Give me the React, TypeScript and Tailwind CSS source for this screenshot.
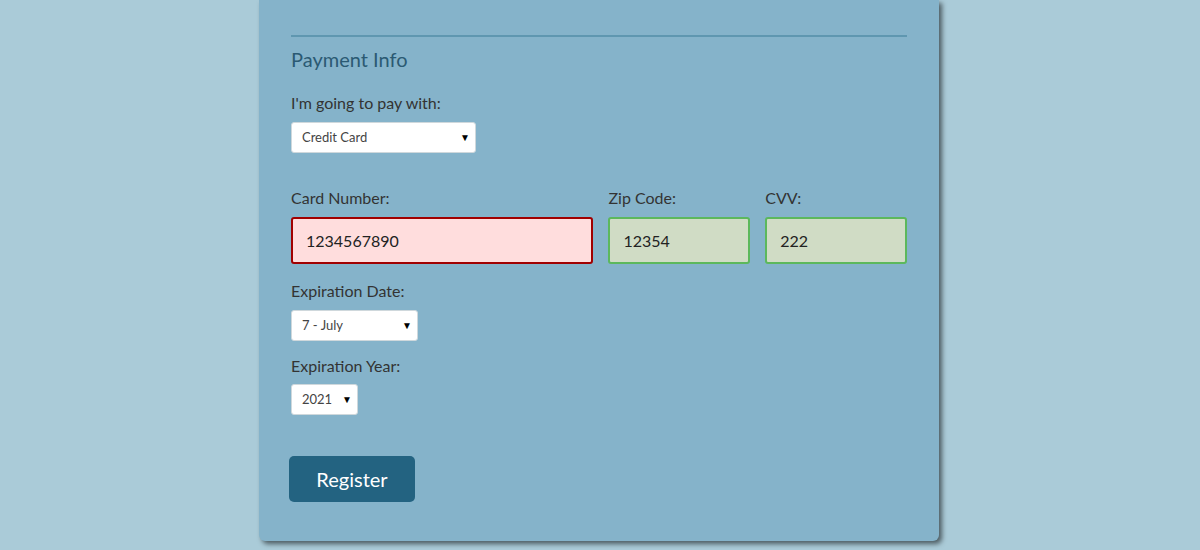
const FONT = "font-['Lato','Open_Sans',sans-serif]";

const SelectBox = ({ value, width }: { value: string; width: string }) => (
  <div className={`relative h-[31px] ${width} rounded-[3px] bg-white border border-[#cfd8dc]`}>
    <select
      defaultValue={value}
      className="h-full w-full appearance-none bg-transparent pl-[10px] pr-6 text-[13px] text-[#444] outline-none"
    >
      <option>{value}</option>
    </select>
    <span className="pointer-events-none absolute right-[5px] top-[7px] text-[10px] text-black">▼</span>
  </div>
);

const Field = ({
  label,
  value,
  width,
  invalid,
}: {
  label: string;
  value: string;
  width: string;
  invalid?: boolean;
}) => (
  <div className={`flex flex-col ${width}`}>
    <label className="text-[16px] leading-6 text-[#333]">{label}</label>
    <input
      readOnly
      value={value}
      className={
        invalid
          ? "mt-[7px] h-[47px] w-full rounded-[3px] border-2 border-[#a10000] bg-[#ffdddd] px-[13px] text-[16px] text-[#222] outline-none"
          : "mt-[7px] h-[47px] w-full rounded-[3px] border-2 border-[#5cb85c] bg-[#d0dcc5] px-[13px] text-[16px] text-[#222] outline-none"
      }
    />
  </div>
);

export default function App() {
  return (
    <div className={`flex h-[550px] w-full justify-center overflow-hidden bg-[#aacbd8] ${FONT}`}>
      <div className="-ml-[2px] flex h-[541px] w-[680px] flex-col rounded-b-[6px] bg-[#85b3ca] px-8 pt-[35px] shadow-[3px_3px_5px_rgba(0,0,0,0.55)]">
        <div className="h-[2px] w-full bg-[#5f97b0]" />
        <h2 className="mt-2 text-[20px] leading-7 text-[#2b5a73]">Payment Info</h2>

        <label className="mt-[18px] text-[16px] leading-6 text-[#333]">I'm going to pay with:</label>
        <div className="mt-[7px]">
          <SelectBox value="Credit Card" width="w-[185px]" />
        </div>

        <div className="mt-[33px] flex gap-[15px]">
          <Field label="Card Number:" value="1234567890" width="w-[303px]" invalid />
          <Field label="Zip Code:" value="12354" width="w-[142px]" />
          <Field label="CVV:" value="222" width="w-[142px]" />
        </div>

        <label className="mt-[15px] text-[16px] leading-6 text-[#333]">Expiration Date:</label>
        <div className="mt-[7px]">
          <SelectBox value="7 - July" width="w-[127px]" />
        </div>

        <label className="mt-[13px] text-[16px] leading-6 text-[#333]">Expiration Year:</label>
        <div className="mt-[6px]">
          <SelectBox value="2021" width="w-[67px]" />
        </div>

        <div className="mt-[41px]">
          <button className="ml-[-2px] h-[46px] w-[126px] rounded-[5px] bg-[#236381] text-[20px] text-white">
            Register
          </button>
        </div>
      </div>
    </div>
  );
}
